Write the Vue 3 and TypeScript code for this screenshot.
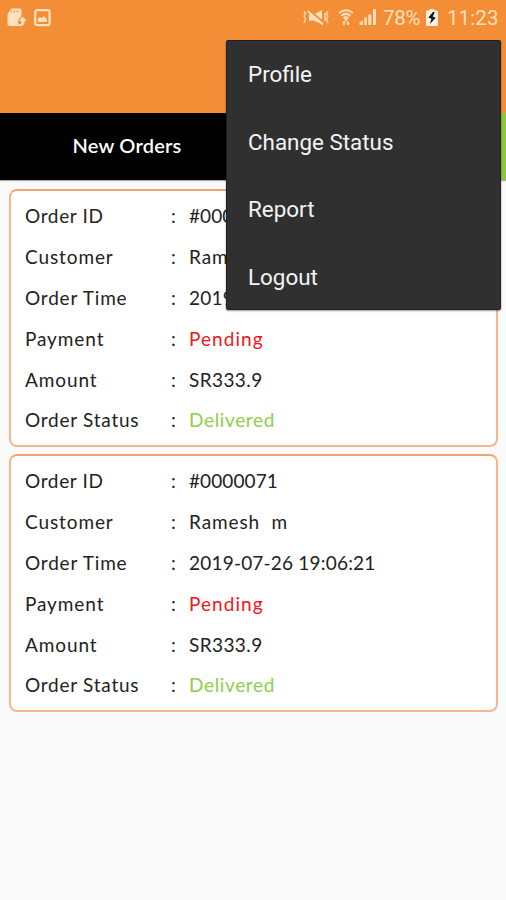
<script setup lang="ts">
interface Row { label: string; value: string; tone?: string; fit: string }

const buildOrder = (): Row[] => [
  { label: 'Order ID', value: '#0000071', fit: 'id' },
  { label: 'Customer', value: 'Ramesh  m', fit: 'customer' },
  { label: 'Order Time', value: '2019-07-26 19:06:21', fit: 'time' },
  { label: 'Payment', value: 'Pending', tone: 'pending', fit: 'payment' },
  { label: 'Amount', value: 'SR333.9', fit: 'amount' },
  { label: 'Order Status', value: 'Delivered', tone: 'delivered', fit: 'status' },
]
const orders: Row[][] = [buildOrder(), buildOrder()]
const menu: string[] = ['Profile', 'Change Status', 'Report', 'Logout']
</script>

<template>
  <div class="screen">
    <header class="header">
      <div class="statusbar">
        <svg class="transfer" width="20" height="20" viewBox="0 0 20 20">
          <path d="M4.500.5H13q1.500 0 1.500 1.500v6l-3.300 4v3.500l2.300 2.500H2.500Q.5 18 .5 16.500V6z" fill="#ffe0bd" />
          <path d="M4.500 2.500v2M7.500 2.500v2M10.500 2.500v2" stroke="#f38d36" stroke-width="1.200" />
          <path d="M15.700 8.500l-4 4.500h2.500v2q0 1.200-2 1.200v2q5.300 0 5.300-3.700V13H20z" fill="#ffe0bd" />
        </svg>
        <svg class="picture" width="18" height="18" viewBox="0 0 18 18">
          <rect x="1.200" y="1.200" width="14.400" height="15" rx="2" fill="none" stroke="#ffe0bd" stroke-width="2.300" />
          <path d="M3.900 13V9.800l2-1.900 1.700 1.300 2.200-2.500 3.200 3.500V13z" fill="#ffe0bd" />
        </svg>
        <span class="space"></span>
        <svg class="mute" width="28" height="18" viewBox="0 0 28 18">
          <path d="M2 3l1.500 2.500L2 8l1.500 3L2 15M26 3l-1.500 2.500L26 8l-1.500 3 1.500 4M23 5v8" fill="none" stroke="#ffe0bd" stroke-width="1.300" />
          <path d="M7 6.500h5L20 2v14.500L12 12.500H7z" fill="#ffe0bd" />
          <path d="M6.500 1.500L23 15.500" stroke="#f38d36" stroke-width="2" />
          <path d="M5.500 3L21 16.500" stroke="#ffe0bd" stroke-width="1.900" />
        </svg>
        <svg class="wifi" width="16" height="20" viewBox="0 0 16 20">
          <path d="M1 5q7-5.500 14 0M3.300 7.800q4.700-3.800 9.400 0M5.500 10.300q2.500-2 5 0" fill="none" stroke="#ffe0bd" stroke-width="2.100" />
          <path d="M6 11h4l-2 2.700z" fill="#ffe0bd" />
          <path d="M6 12.800L8 15H6.800v2.300H5.200V15H4zM10 17.500L8 15.300h1.200v-2h1.600v2H12z" fill="#ffe0bd" />
        </svg>
        <svg class="signal" width="18" height="18" viewBox="0 0 18 18">
          <path d="M.5 17v-2.500L4 12v5zM5.300 17V9.500h2.500V17zM9.300 17V6.500h3V17zM14 17V1h3v16z" fill="#ffe0bd" />
        </svg>
        <span class="percent">78%</span>
        <svg class="battery" width="12" height="17" viewBox="0 0 12 17">
          <path d="M3.500 0h5v1.500H11q1 0 1 1V16q0 1-1 1H1q-1 0-1-1V2.500q0-1 1-1h2.500z" fill="#fff1df" />
          <path d="M7 3L2.300 8.500l3.200 1.200L3.800 15l6-6.300-3.100-1.300L8.800 3z" fill="#151515" />
        </svg>
        <span class="clock">11:23</span>
      </div>
    </header>

    <nav class="tabs">
      <div class="tab"><span>New Orders</span></div>
      <div class="tab other"></div>
    </nav>

    <main class="orders">
      <section v-for="(order, i) in orders" :key="i" class="card">
        <div v-for="row in order" :key="row.label" class="row" :class="row.fit">
          <span class="label">{{ row.label }}</span>
          <span class="colon">:</span>
          <span class="value" :class="row.tone">{{ row.value }}</span>
        </div>
      </section>
    </main>

    <ul class="menu">
      <li v-for="item in menu" :key="item">{{ item }}</li>
    </ul>
  </div>
</template>

<style>
body { margin: 0; background: #fafafa; }
</style>

<style scoped>
.screen { position: relative; width: 506px; height: 900px; overflow: hidden; background: #fafafa; font-family: Lato, "Liberation Sans", sans-serif; }
.header { height: 113px; background: #f38d36; }
.statusbar { display: flex; align-items: flex-start; height: 36px; padding: 8px 9px 0 7px; box-sizing: border-box; color: #ffe0bd; font: 20.500px/20px Roboto, sans-serif; }
.statusbar svg { flex: none; }
.transfer { margin-right: 7px; }
.picture { margin-top: 1px; }
.space { flex: 1; }
.mute { margin-right: 8px; }
.wifi { margin-right: 5px; }
.signal { margin-right: 6px; }
.percent { width: 38px; margin-right: 5px; letter-spacing: -.3px; }
.battery { margin: 1px 9px 0 0; }
.clock { width: 51px; letter-spacing: .1px; margin-right: -1px; }
.tabs { display: flex; height: 67px; background: #000; box-shadow: 0 1px 1px #aaa; position: relative; }
.tab { flex: 1; display: flex; align-items: center; justify-content: center; padding: 0 0 3px 1px; box-sizing: border-box; color: #fff; font-size: 20px; font-weight: 600; letter-spacing: .2px; }
.other { background: #8fc63b; }
.orders { display: flex; flex-direction: column; gap: 7px; padding: 9px 8px 0 9px; }
.card { height: 258px; padding: 5px 14px 0; box-sizing: border-box; border: 2px solid #f5b78e; border-top-color: #f2a571; border-radius: 8px; background: #fff; }
.row { display: flex; align-items: center; height: 40.800px; font-size: 19px; line-height: 24px; color: #222; white-space: pre; letter-spacing: .9px; }
.label { width: 146px; }
.colon { width: 18px; }
.value { color: #222; }
.id .label { letter-spacing: .65px; }
.id .value { letter-spacing: .1px; }
.time .label { letter-spacing: .8px; }
.time .value { letter-spacing: .2px; }
.amount .value { letter-spacing: .4px; }
.status .label { letter-spacing: .75px; }
.value.pending { color: #f11520; letter-spacing: 1.050px; }
.value.delivered { color: #8fce4c; letter-spacing: .65px; }
.menu { position: absolute; top: 40px; left: 226px; width: 275px; height: 270px; margin: 0; padding: 0; list-style: none; box-sizing: border-box; background: #303030; border: 1px solid #202020; border-radius: 2px; box-shadow: 0 1px 2px rgba(0, 0, 0, .4); font: 22.400px/67.500px Roboto, sans-serif; color: #f4f4f4; }
.menu li { height: 67.500px; padding-left: 21px; }
</style>
